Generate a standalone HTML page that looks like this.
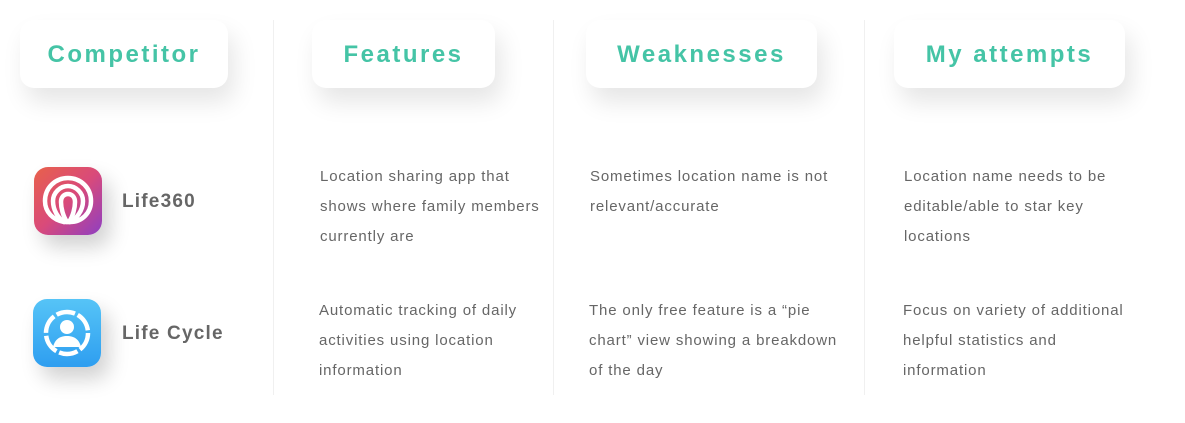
<!DOCTYPE html>
<html><head><style>
body{margin:0;width:1185px;height:423px;background:#fff;font-family:"Liberation Sans",sans-serif;position:relative;overflow:hidden}
.h{position:absolute;top:20px;height:68px;background:#fff;border-radius:14px;box-shadow:6px 14px 24px rgba(0,0,0,0.10);color:#45c4a6;font-size:24px;font-weight:bold;letter-spacing:2.5px;display:flex;align-items:center;justify-content:center;padding-top:2px;box-sizing:border-box}
.d{position:absolute;top:20px;width:1px;height:375px;background:#f0f0f0}
.t{position:absolute;color:#666;font-size:15px;line-height:30px;letter-spacing:0.85px}
.ic{position:absolute;width:68px;height:68px;border-radius:14px;box-shadow:8px 12px 20px rgba(0,0,0,0.18)}
.n{position:absolute;color:#666;font-size:19px;font-weight:bold;letter-spacing:1.2px}
</style></head><body>
<div class="h" style="left:20px;width:208px">Competitor</div>
<div class="h" style="left:312px;width:183px">Features</div>
<div class="h" style="left:586px;width:231px">Weaknesses</div>
<div class="h" style="left:894px;width:231px">My attempts</div>
<div class="d" style="left:273px"></div><div class="d" style="left:553px"></div><div class="d" style="left:864px"></div>

<div class="ic" style="left:34px;top:167px;background:linear-gradient(135deg,#e8614a,#d94a7a 50%,#8e3fc2)">
<svg width="68" height="68" viewBox="0 0 68 68" fill="none" stroke="#fff" stroke-width="4.5" stroke-linecap="round">
<path d="M30 55 C19 53 11 45 11 34 C11 21 21 11 34 11 C47 11 57 21 57 34 C57 46 48 55 36 55 Z"/>
<path d="M30 55 C24 51 19 43 19 34 C19 26 26 19 34 19 C42 19 49 26 49 34 C49 44 42 52 36 55"/>
<path d="M33 55 C29 49 27 41 27 35 C27 30 30 27 34 27 C38 27 41 30 41 35 C41 41 39 49 35 55"/>
</svg></div>
<div class="n" style="left:122px;top:191px">Life360</div>

<div class="ic" style="left:33px;top:299px;background:linear-gradient(180deg,#56c4f7,#2e9ef0)">
<svg width="68" height="68" viewBox="0 0 68 68" fill="none">
<circle cx="34" cy="34" r="21" stroke="#fff" stroke-width="4.5" stroke-dasharray="19 3"/>
<circle cx="34" cy="28" r="7" fill="#fff"/>
<path d="M20 48 C22 40 27 37 34 37 C41 37 46 40 48 48 Z" fill="#fff"/>
</svg></div>
<div class="n" style="left:122px;top:323px">Life Cycle</div>

<div class="t" style="left:320px;top:162px">Location sharing app that<br>shows where family members<br>currently are</div>
<div class="t" style="left:590px;top:162px">Sometimes location name is not<br>relevant/accurate</div>
<div class="t" style="left:904px;top:162px">Location name needs to be<br>editable/able to star key<br>locations</div>
<div class="t" style="left:319px;top:296px">Automatic tracking of daily<br>activities using location<br>information</div>
<div class="t" style="left:589px;top:296px">The only free feature is a “pie<br>chart” view showing a breakdown<br>of the day</div>
<div class="t" style="left:903px;top:296px">Focus on variety of additional<br>helpful statistics and<br>information</div>
</body></html>
